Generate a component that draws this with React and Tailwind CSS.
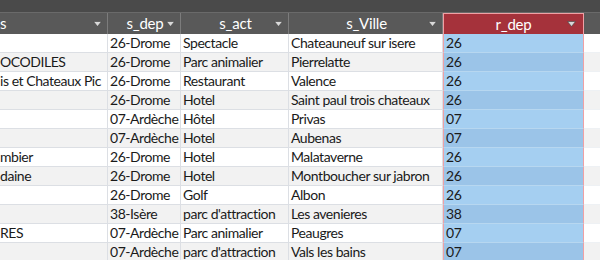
const cols = [
  { key: 'a', label: 's', w: 108, align: 'left' },
  { key: 'dep', label: 's_dep', w: 73 },
  { key: 'act', label: 's_act', w: 108 },
  { key: 'ville', label: 's_Ville', w: 154 },
  { key: 'r', label: 'r_dep', w: 141 },
];

const rows = [
  ['', '26-Drome', 'Spectacle', 'Chateauneuf sur isere', '26'],
  ['OCODILES', '26-Drome', 'Parc animalier', 'Pierrelatte', '26'],
  ['is et Chateaux Pic', '26-Drome', 'Restaurant', 'Valence', '26'],
  ['', '26-Drome', 'Hotel', 'Saint paul trois chateaux', '26'],
  ['', '07-Ardèche', 'Hôtel', 'Privas', '07'],
  ['', '07-Ardèche', 'Hotel', 'Aubenas', '07'],
  ['mbier', '26-Drome', 'Hotel', 'Malataverne', '26'],
  ['daine', '26-Drome', 'Hotel', 'Montboucher sur jabron', '26'],
  ['', '26-Drome', 'Golf', 'Albon', '26'],
  ['', '38-Isère', "parc d'attraction", 'Les avenieres', '38'],
  ['RES', '07-Ardèche', 'Parc animalier', 'Peaugres', '07'],
  ['', '07-Ardèche', "parc d'attraction", 'Vals les bains', '07'],
];

function Arrow() {
  return (
    <svg width="9" height="6" viewBox="0 0 9 6" className="shrink-0">
      <path d="M0.5 0.5 H8.5 L4.5 5.5 Z" fill="#d9d9d9" stroke="#3f3f3f" strokeWidth="0.6" />
    </svg>
  );
}

export default function App() {
  return (
    <div
      className="w-[600px] h-[260px] overflow-hidden bg-white text-[14px] tracking-[-0.45px] text-[#1a1a1a]"
      style={{ fontFamily: 'Lato, "Open Sans", sans-serif' }}
    >
      <div className="h-[13px] bg-[#4a4a4a] border-b border-[#6a6a6a]" />
      <div className="flex h-[21px] bg-[#595959] text-[15px] tracking-[-0.2px]">
        {cols.map((c) =>
          c.key === 'r' ? (
            <div
              key={c.key}
              style={{ width: c.w }}
              className="shrink-0 flex items-center bg-[#a5323b] border border-b-0 border-[#f0a0a4] text-white pl-1 pr-[7px]"
            >
              <span className="flex-1 text-center pl-3">{c.label}</span>
              <Arrow />
            </div>
          ) : (
            <div
              key={c.key}
              style={{ width: c.w }}
              className="shrink-0 flex items-center border-r border-[#7c7c7c] text-white pl-1 pr-[5px]"
            >
              <span className={c.align === 'left' ? 'flex-1 -ml-1' : 'flex-1 text-center pl-3'}>{c.label}</span>
              <Arrow />
            </div>
          )
        )}
        <div className="flex-1" />
      </div>
      {rows.map((r, i) => {
        const even = i % 2 === 1;
        return (
          <div key={i} className={`flex h-[19px] leading-[18px] ${even ? 'bg-[#f2f2f2]' : 'bg-white'}`}>
            {cols.map((c, j) =>
              c.key === 'r' ? (
                <div
                  key={c.key}
                  style={{ width: c.w }}
                  className={`shrink-0 border-x border-[#f0a0a4] pl-[2px] border-b-[1px] border-b-[#b7d7f0] whitespace-nowrap overflow-hidden ${even ? 'bg-[#9bc4e8]' : 'bg-[#a5cff1]'}`}
                >
                  {r[j]}
                </div>
              ) : (
                <div
                  key={c.key}
                  style={{ width: c.w }}
                  className={`shrink-0 border-r border-b border-[#dcdfe4] whitespace-nowrap overflow-hidden ${j === 0 ? 'pl-0' : 'pl-[2px]'}`}
                >
                  {r[j]}
                </div>
              )
            )}
            <div className="flex-1 border-b border-[#eef1f4]" />
          </div>
        );
      })}
    </div>
  );
}
